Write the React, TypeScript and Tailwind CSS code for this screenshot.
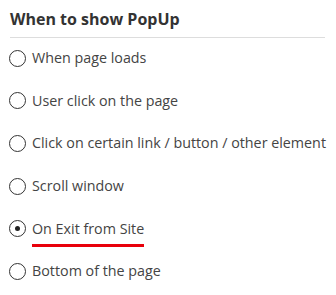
import React from "react";

const options = [
  "When page loads",
  "User click on the page",
  "Click on certain link / button / other element",
  "Scroll window",
  "On Exit from Site",
  "Bottom of the page",
];

function Radio({ checked }: { checked: boolean }) {
  return (
    <span className="flex h-[17px] w-[17px] shrink-0 items-center justify-center rounded-full border border-[#333] bg-white">
      {checked && <span className="h-[5px] w-[5px] rounded-full bg-[#222]" />}
    </span>
  );
}

export default function App() {
  return (
    <div className="h-[295px] w-[336px] bg-white font-['Open_Sans',sans-serif]">
      <div className="ml-[10px] mr-[11px] border-b border-[#dddddd] pt-[8px] pb-[7px]">
        <h2 className="text-[16px] font-bold leading-[22px] text-[#333]">When to show PopUp</h2>
      </div>
      <div className="flex flex-col gap-[18.7px] pl-[9px] pt-[8px]">
        {options.map((o, i) => (
          <div key={o} className="flex h-[24px] items-center gap-[6px]">
            <Radio checked={i === 4} />
            <span className="relative whitespace-nowrap text-[14.3px] leading-[24px] text-[#444]">
              {o}
              {i === 4 && (
                <span className="absolute left-0 right-0 top-[27px] h-[3px] bg-[#e8000b]" />
              )}
            </span>
          </div>
        ))}
      </div>
    </div>
  );
}
